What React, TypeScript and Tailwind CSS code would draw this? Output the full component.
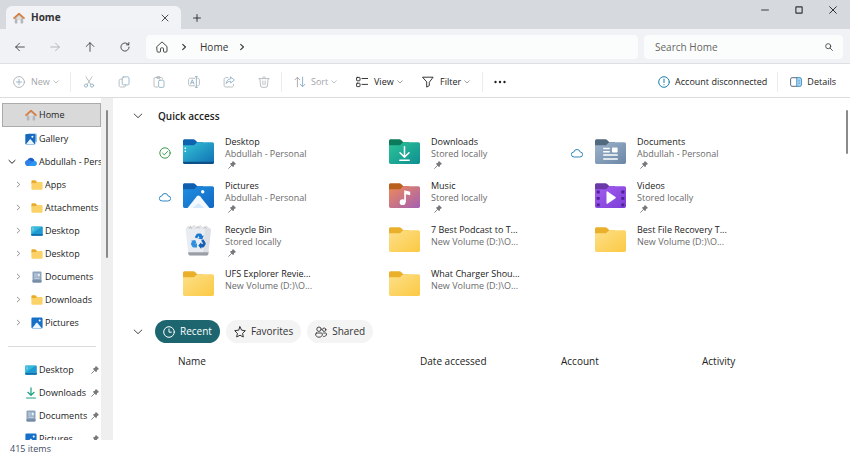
import { useState, type ReactNode } from 'react'

type Kind = 'desktop' | 'pictures' | 'downloads' | 'music' | 'documents' | 'videos' | 'plain' | 'bin'
type QuickItem = { name: string; place: string; kind: Kind; pinned?: boolean; sync?: 'done' | 'cloud' }
type NavKind = 'folder' | 'desktop' | 'documents' | 'pictures' | 'downloads'

const quickItems: QuickItem[] = [
  { name: 'Desktop', place: 'Abdullah - Personal', kind: 'desktop', pinned: true, sync: 'done' },
  { name: 'Downloads', place: 'Stored locally', kind: 'downloads', pinned: true },
  { name: 'Documents', place: 'Abdullah - Personal', kind: 'documents', pinned: true, sync: 'cloud' },
  { name: 'Pictures', place: 'Abdullah - Personal', kind: 'pictures', pinned: true, sync: 'cloud' },
  { name: 'Music', place: 'Stored locally', kind: 'music', pinned: true },
  { name: 'Videos', place: 'Stored locally', kind: 'videos', pinned: true },
  { name: 'Recycle Bin', place: 'Stored locally', kind: 'bin', pinned: true },
  { name: '7 Best Podcast to T...', place: 'New Volume (D:)\\O...', kind: 'plain' },
  { name: 'Best File Recovery T...', place: 'New Volume (D:)\\O...', kind: 'plain' },
  { name: 'UFS Explorer Revie...', place: 'New Volume (D:)\\O...', kind: 'plain' },
  { name: 'What Charger Shou...', place: 'New Volume (D:)\\O...', kind: 'plain' },
]

const treeItems: { name: string; kind: NavKind }[] = [
  { name: 'Apps', kind: 'folder' },
  { name: 'Attachments', kind: 'folder' },
  { name: 'Desktop', kind: 'desktop' },
  { name: 'Desktop', kind: 'folder' },
  { name: 'Documents', kind: 'documents' },
  { name: 'Downloads', kind: 'folder' },
  { name: 'Pictures', kind: 'pictures' },
]

const pinnedItems: { name: string; kind: NavKind }[] = [
  { name: 'Desktop', kind: 'desktop' },
  { name: 'Downloads', kind: 'downloads' },
  { name: 'Documents', kind: 'documents' },
  { name: 'Pictures', kind: 'pictures' },
]

// tab, gradient start, gradient end
const folderColors: Record<Kind, [string, string, string]> = {
  desktop: ['#0f62b0', '#35c4d6', '#0f6fb4'],
  pictures: ['#0f5eb0', '#1f8fe0', '#1268c4'],
  downloads: ['#0d7a5c', '#2cc497', '#0f8f92'],
  music: ['#b9601c', '#ee8a58', '#a45fb4'],
  documents: ['#51697d', '#9db4cb', '#6b86a6'],
  videos: ['#6a3aa8', '#a65cf0', '#7a3fd8'],
  plain: ['#eab02c', '#fde08a', '#fbc943'],
  bin: ['', '', ''],
}

/* ---------- line icons ---------- */

function Line({ children, className = 'size-3', w = 1 }: { children: ReactNode; className?: string; w?: number }) {
  return (
    <svg viewBox="0 0 12 12" fill="none" stroke="currentColor" strokeWidth={w} strokeLinecap="round" strokeLinejoin="round"
      className={`shrink-0 ${className}`} aria-hidden="true">
      {children}
    </svg>
  )
}

const ChevronDown = ({ className = 'size-3', w = 1 }: { className?: string; w?: number }) => (
  <Line className={className} w={w}><path d="M1.400 3.600 6 8l4.600-4.400" /></Line>
)
const ChevronRight = ({ className = 'size-2' }: { className?: string }) => (
  <Line className={className} w={1.6}><path d="M4 2l4.200 4L4 10" /></Line>
)

const CutIcon = () => (
  <Line w={0.8}>
    <path d="M3 .8l4.800 7.600M9 .8L4.200 8.400" />
    <g stroke="#86a9bf"><circle cx="3" cy="9.600" r="1.600" /><circle cx="9" cy="9.600" r="1.600" /></g>
  </Line>
)
const CopyIcon = () => (
  <Line w={0.8}>
    <rect x="4.200" y=".9" width="6.800" height="8" rx="1.400" stroke="#86a9bf" />
    <path d="M4 3.200H2.600c-.9 0-1.500.6-1.500 1.500v4.800c0 .9.6 1.500 1.500 1.500h3.600c.8 0 1.300-.6 1.300-1.300v-.6" />
  </Line>
)
const PasteIcon = () => (
  <Line w={0.8}>
    <path d="M4.600 11H2.400C1.600 11 1 10.400 1 9.600V2.800C1 2 1.600 1.500 2.400 1.500h5.800c.8 0 1.400.5 1.400 1.300" />
    <path d="M3.400 1.500c0-.6.4-.9.9-.9h2c.5 0 .9.300.9.9s-.4.900-.9.900h-2c-.5 0-.9-.3-.9-.9z" />
    <rect x="5.600" y="4.200" width="5.400" height="7.200" rx="1.200" stroke="#86a9bf" />
  </Line>
)
const RenameIcon = () => (
  <Line w={0.8}>
    <path d="M7 2.200H2.200C1.300 2.200.6 2.900.6 3.800v4.400c0 .9.7 1.600 1.600 1.600H7M9.800 2.200c.9 0 1.600.7 1.600 1.600v4.400c0 .9-.7 1.600-1.600 1.600" />
    <path d="M2.600 8l1.700-4.300L6 8M3.200 6.700h2.200M8.400.8v10.400M7.400.6h2M7.400 11.400h2" stroke="#86a9bf" />
  </Line>
)
const ShareIcon = () => (
  <Line w={0.8}>
    <path d="M5 1.600H2.800c-1 0-1.700.7-1.700 1.700v6c0 1 .7 1.700 1.700 1.700h6c1 0 1.700-.7 1.700-1.700V8.400" />
    <path d="M7.600 1l3.800 3-3.800 3V5.300C5.600 5.200 4.200 6 3.200 7.600c.2-2.900 1.900-4.600 4.400-4.900z" stroke="#86a9bf" />
  </Line>
)
const TrashIcon = () => (
  <Line w={0.8}>
    <path d="M.8 2.600h10.400M4.500 2.400C4.500 1.500 5.100.9 6 .9s1.500.6 1.500 1.500M1.900 2.800l.7 7.200c.1.800.6 1.300 1.400 1.300h4c.8 0 1.300-.5 1.400-1.300l.7-7.200M4.900 5v3.800M7.100 5v3.800" />
  </Line>
)
const HomeLine = () => (
  <Line w={0.9}>
    <path d="M1 5.500L6 .9l5 4.600v4.600c0 .6-.4 1-1 1H8.200c-.4 0-.7-.3-.7-.7V7.600c0-.4-.3-.7-.7-.7H5.200c-.4 0-.7.3-.7.700v2.800c0 .4-.3.700-.7.700H2c-.6 0-1-.4-1-1z" />
  </Line>
)

const Pin = () => (
  <svg viewBox="0 0 9 9" className="size-2 shrink-0 text-[#77797c]" aria-hidden="true">
    <path d="M5.200.4c.2-.3.5-.3.8-.1l2.600 2.500c.3.300.2.700-.1.900L6.900 4.500l-.6 2c-.1.400-.5.500-.8.200L2.300 3.500c-.3-.3-.2-.7.2-.8l1.900-.6z" fill="currentColor" />
    <path d="M4 5L.7 8.300" stroke="currentColor" strokeLinecap="round" />
  </svg>
)

/* ---------- coloured icons ---------- */

const HouseIcon = () => (
  <svg viewBox="0 0 12 12" className="size-3 shrink-0" aria-hidden="true">
    <path d="M1.800 5.500L6 1.800l4.200 3.700v5.300c0 .4-.3.700-.7.700H7.600V7.600H4.400v3.900H2.500c-.4 0-.7-.3-.7-.7z" fill="#b4b7bd" />
    <path d="M3.600 5.400L6 3.400l2.400 2v2.200H3.600z" fill="#e4dcd6" />
    <path d="M1 6.200L6 1.500l5 4.700" fill="none" stroke="#db7d3b" strokeWidth="1.600" strokeLinecap="round" strokeLinejoin="round" />
  </svg>
)

const GalleryIcon = () => (
  <svg viewBox="0 0 12 12" className="size-3 shrink-0" aria-hidden="true">
    <path d="M3 .5h7.500c.8 0 1.300.5 1.300 1.300v8z" fill="#7fb9e6" />
    <rect x=".3" y="1" width="10" height="10.500" rx="1.300" fill="#1769bd" />
    <path d="M1 11.300l3.600-4.600c.4-.5 1-.5 1.400 0l3.700 4.600z" fill="#eaf5fd" />
    <circle cx="7.400" cy="3.800" r="1" fill="#fff" />
  </svg>
)

const OneDriveIcon = () => (
  <svg viewBox="0 0 12 12" className="size-3 shrink-0" aria-hidden="true">
    <path d="M3 10a3 3 0 0 1-.6-5.900A3.700 3.700 0 0 1 9 3.600l.4.900L5 10z" fill="#1a5fce" />
    <path d="M2.300 4.200c1.900-.8 3.100.1 4.600 1.200l3.700 2.900-2.800 1.700H3A3 3 0 0 1 .3 7.200c0-1.500.8-2.600 2-3z" fill="#2f7fe8" />
    <path d="M2.800 10l4.900-4.600c1.800-1.500 4.200 0 4.200 2.200 0 1.400-1 2.400-2.300 2.400z" fill="#2b97f4" />
  </svg>
)

function NavIcon({ kind }: { kind: NavKind }) {
  return (
    <svg viewBox="0 0 12 12" className="size-3 shrink-0" aria-hidden="true">
      {kind === 'folder' && <>
        <path d="M.4 2.200c0-.5.400-.9.900-.9h3l1.500 1.500H6v2H.4z" fill="#e9ab2c" />
        <path d="M.4 4.200h3.700c.6 0 .9-.2 1.300-.6l.6-.7h4.700c.5 0 .9.400.9.900v6c0 .5-.4.900-.9.900H1.300c-.5 0-.9-.4-.9-.9z" fill="#fbd267" />
      </>}
      {kind === 'desktop' && <>
        <rect x=".2" y="1.500" width="11.600" height="9.200" rx="1" fill="#1f9bd1" />
        <path d="M.2 9V2.500c0-.6.400-1 1-1h9.600z" fill="#3fc3df" opacity=".75" />
        <path d="M.2 9h11.600v.7c0 .6-.4 1-1 1H1.200c-.6 0-1-.4-1-1z" fill="#1170ad" />
        <path d="M1.500 3h1M1.500 4.800h1" stroke="#fff" strokeWidth=".7" />
      </>}
      {kind === 'documents' && <>
        <rect x="1.500" y=".4" width="9" height="11.200" rx="1.100" fill="#8ea4bd" />
        <path d="M3.200 3h2.600M3.200 5h2.600M3.200 7.200h5.600" stroke="#e4edf6" strokeWidth=".8" />
        <rect x="6.600" y="2.600" width="2.200" height="2.800" fill="#e9f1f9" />
        <path d="M1.500 9.200h9v1.300c0 .6-.5 1.100-1.100 1.100H2.600c-.6 0-1.100-.5-1.100-1.100z" fill="#7389a5" />
      </>}
      {kind === 'pictures' && <>
        <rect x=".4" y=".6" width="11.200" height="10.800" rx="1.100" fill="#1670c8" />
        <path d="M1.200 11.200L5 6.200c.5-.6 1.200-.6 1.700 0l4.100 5z" fill="#eef7fe" />
        <circle cx="8.700" cy="3.400" r="1" fill="#fff" />
      </>}
      {kind === 'downloads' && (
        <path d="M6 .8v7.400M2.900 5.300L6 8.300l3.100-3M1.600 11h8.800" fill="none" stroke="#1aa183" strokeWidth="1.200" strokeLinecap="round" strokeLinejoin="round" />
      )}
    </svg>
  )
}

function BinIcon() {
  return (
    <svg viewBox="0 0 31 32" className="h-8 w-[31px] shrink-0" aria-hidden="true">
      <path d="M3 4.500l2.500-3 2.500 1.500L11 .8l3 2.200 3.500-2L20 3l3.500-1.500L27.500 5v3H3z" fill="#e3e5e8" />
      <path d="M6 5l1.500-2.500L9 5M13 4.500l2-2 1.500 2M20.500 5l1.800-2 1.700 2" fill="none" stroke="#a9adb3" strokeWidth=".8" />
      <path d="M2.500 4.800H28L25.300 30c-.1.900-.7 1.400-1.500 1.400H6.900c-.8 0-1.400-.5-1.500-1.400z" fill="#e9edf1" />
      <path d="M22 4.800h6L25.300 30c-.1.900-.7 1.400-1.500 1.400H20z" fill="#dce0e5" />
      <path d="M5.200 28.300h20.300L25.300 30c-.1.900-.7 1.400-1.500 1.400H6.900c-.8 0-1.400-.5-1.500-1.400z" fill="#9a9fa6" />
      <path d="M11.700 13.200l1.800-2.900c.4-.6.900-.8 1.500-.8h2.200c.7 0 1.200.3 1.500.9l.9 1.500 1.200-.7-1.500 4.200-4.300-.8 1.400-.9-1-1.700-1.300 2.500z" fill="#1c78d0" />
      <path d="M20.400 15.300l2.100 3.500c.3.600.3 1.200 0 1.700l-1.200 2.100c-.3.600-.8.900-1.500.9h-1.600v1.400l-2.900-3.400 2.900-3.300v1.600h2l-2-3.400z" fill="#155fb5" />
      <path d="M14 23.500h-3.300c-.7 0-1.200-.3-1.500-.9l-1-1.900c-.3-.6-.3-1.100 0-1.700l.9-1.500-1.200-.7 4.400-.8 1.500 4.200-1.400-.8-.3.700H14z" fill="#2f90e0" />
    </svg>
  )
}

function BigIcon({ kind }: { kind: Kind }) {
  if (kind === 'bin') return <BinIcon />
  const [tab, from, to] = folderColors[kind]
  const id = `fill-${kind}`
  return (
    <svg viewBox="0 0 31 25" className="h-[25px] w-[31px] shrink-0" aria-hidden="true">
      <defs>
        <linearGradient id={id} x1="0" y1="0" x2="1" y2="1">
          <stop offset="0" stopColor={from} />
          <stop offset="1" stopColor={to} />
        </linearGradient>
      </defs>
      <path d="M0 1.800C0 .8.800.2 1.700.2h8.700c.7 0 1.200.2 1.700.7l2.300 2.400H20v5H0z" fill={tab} />
      <path d="M0 6.300h9.800c.9 0 1.500-.3 2.100-.9l1.400-1.500c.4-.4.900-.6 1.500-.6h14.500c1 0 1.700.7 1.700 1.700v18.200c0 1-.7 1.700-1.700 1.700H1.700c-1 0-1.700-.7-1.700-1.700z" fill={`url(#${id})`} />
      {kind === 'desktop' && <>
        <path d="M0 22.700h31v.5c0 1-.7 1.700-1.700 1.700H1.700c-1 0-1.700-.7-1.700-1.700z" fill="#0d4f86" />
        <path d="M2.300 8.500v1.500M2.300 11.500v1.500" stroke="#e8fbff" strokeWidth="1.500" />
      </>}
      {kind === 'pictures' && <>
        <path d="M4.500 24.900l9.400-11.600c.9-1 2.200-1 3.100 0l9.500 11.600z" fill="#f3f9fe" />
        <path d="M9.800 24.900l4.600-4c.6-.5 1.500-.5 2.100 0l4.600 4z" fill="#d5e9fa" />
        <circle cx="19.700" cy="8.800" r="1.700" fill="#fff" />
      </>}
      {kind === 'downloads' && (
        <path d="M15.500 7.800v10M11 13.800l4.500 4.300 4.500-4.300M10.800 21.200h9.400" fill="none" stroke="#fff" strokeWidth="1.500" strokeLinejoin="round" strokeLinecap="round" />
      )}
      {kind === 'music' && <>
        <circle cx="13.600" cy="19.200" r="2.900" fill="#fff" />
        <path d="M15.200 7.200l6 1.500v3.600l-4.300-1.100v8h-1.700z" fill="#fff" />
      </>}
      {kind === 'documents' && <>
        <path d="M8.200 9.500h6.600M8.200 12.700h6.600M8.200 16h14.600M8.200 20h14.600" stroke="#fff" strokeWidth="1.400" />
        <rect x="17" y="8.600" width="5.600" height="5" rx=".8" fill="#fff" />
      </>}
      {kind === 'videos' && <>
        <path d="M3.200 7.600v16.400M27.800 7.600v16.400" stroke="#4a2394" strokeWidth="3" strokeDasharray="2.800 3.600" />
        <path d="M11.500 9v11.200c0 .6.500.8 1 .5l8-5.500c.4-.3.400-.8 0-1.100l-8-5.600c-.5-.3-1-.1-1 .5z" fill="#fff" />
      </>}
    </svg>
  )
}

/* ---------- page pieces ---------- */

function IconButton({ label, className, children }: { label: string; className: string; children: ReactNode }) {
  return <button aria-label={label} className={`flex shrink-0 items-center justify-center ${className}`}>{children}</button>
}

const Divider = () => <span className="h-5 w-px shrink-0 bg-[#ececec]" />

function TitleBar() {
  return (
    <header className="flex h-[29px] shrink-0 bg-[#d6d9de] pl-1.5">
      <div className="mt-1.5 flex w-[175px] items-center rounded-t-md bg-[#f2f3f7] pr-[10px] pl-[7px]">
        <HouseIcon />
        <span className="ml-1.5 text-[10px] font-bold text-[#333]">Home</span>
        <IconButton label="Close tab" className="ml-auto size-3">
          <Line className="size-2" w={1.2}><path d="M1.500 1.500l9 9M10.500 1.500l-9 9" /></Line>
        </IconButton>
      </div>
      <IconButton label="New tab" className="mt-1.5 w-8">
        <Line className="size-2" w={1.3}><path d="M6 .8v10.400M.8 6h10.400" /></Line>
      </IconButton>
      <div className="ml-auto flex h-5 text-[#333]">
        <IconButton label="Minimize" className="w-[34px]"><Line className="size-2" w={1.4}><path d="M.8 6h10.400" /></Line></IconButton>
        <IconButton label="Maximize" className="w-[34px]"><Line className="size-2" w={1.7}><rect x="1.300" y="1.300" width="9.400" height="9.400" rx=".6" /></Line></IconButton>
        <IconButton label="Close" className="w-[34px]"><Line className="size-2" w={1.5}><path d="M1 1l10 10M11 1L1 11" /></Line></IconButton>
      </div>
    </header>
  )
}

function AddressBar() {
  return (
    <nav className="flex h-[35px] shrink-0 items-center border-b border-[#dfe0e3] bg-[#f1f2f6] pt-0.5 pr-[7px] pl-0.5 text-[#333]">
      <IconButton label="Back" className="h-6 w-[35px]"><Line className="size-[10px]"><path d="M11.200 6H.9M5.400 1.400L.8 6l4.600 4.600" /></Line></IconButton>
      <IconButton label="Forward" className="h-6 w-[35px] text-[#a9abb0]"><Line className="size-[10px]"><path d="M.8 6h10.300M6.600 1.400L11.200 6l-4.600 4.600" /></Line></IconButton>
      <IconButton label="Up" className="h-6 w-[35px]"><Line className="size-[10px]"><path d="M6 11.200V.9M1.400 5.400L6 .8l4.600 4.600" /></Line></IconButton>
      <IconButton label="Refresh" className="h-6 w-[35px]"><Line className="size-[10px]"><path d="M10.900 6A4.900 4.900 0 1 1 8.900 2.100l1.500 1.200M10.600.6v2.800H7.800" /></Line></IconButton>
      <div className="ml-1 flex h-6 min-w-0 flex-1 items-center rounded bg-[#fbfcfc] pl-[10px]">
        <HomeLine />
        <ChevronRight className="ml-3 size-2" />
        <a href="#home" className="ml-3 text-[10px]">Home</a>
        <ChevronRight className="ml-[10px] size-2" />
      </div>
      <label className="ml-1.5 flex h-6 w-[199px] items-center rounded bg-[#fbfcfc] pr-[10px] pl-[11px]">
        <input type="search" placeholder="Search Home" aria-label="Search Home"
          className="min-w-0 flex-1 bg-transparent text-[10px] outline-none placeholder:text-[#666]" />
        <Line className="size-2" w={1.2}><circle cx="4.800" cy="4.800" r="3.800" /><path d="M7.700 7.700l3.500 3.500" /></Line>
      </label>
    </nav>
  )
}

function Toolbar() {
  return (
    <div role="toolbar" aria-label="Commands" className="flex h-[34px] shrink-0 items-center border-b border-[#dcdcdc] bg-white pt-0.5 text-[9px]">
      <button disabled className="flex w-[70px] items-center pl-[13px] text-[#a3a6a9]">
        <Line w={0.8}><circle cx="6" cy="6" r="5.400" /><path d="M6 3.400v5.200M3.400 6h5.200" stroke="#86a9bf" /></Line>
        <span className="ml-1.5">New</span>
        <ChevronDown className="ml-[3px] size-1.5" w={1.4} />
      </button>
      <Divider />
      <div className="flex text-[#a9afb4]">
        <IconButton label="Cut" className="h-6 w-[35px]"><CutIcon /></IconButton>
        <IconButton label="Copy" className="h-6 w-[35px]"><CopyIcon /></IconButton>
        <IconButton label="Paste" className="h-6 w-[35px]"><PasteIcon /></IconButton>
        <IconButton label="Rename" className="h-6 w-[35px]"><RenameIcon /></IconButton>
        <IconButton label="Share" className="h-6 w-[35px]"><ShareIcon /></IconButton>
        <IconButton label="Delete" className="h-6 w-[35px]"><TrashIcon /></IconButton>
      </div>
      <Divider />
      <button disabled className="flex w-[62px] items-center pl-3 text-[#a3a6a9]">
        <Line w={0.9}><path d="M3.400 10.800V1.400M1 3.800l2.400-2.500 2.400 2.500" /><path d="M8.600 1.200v9.400M6.200 8.200l2.400 2.500L11 8.200" stroke="#86a9bf" /></Line>
        <span className="ml-[5px]">Sort</span>
        <ChevronDown className="ml-[3px] size-1.5" w={1.4} />
      </button>
      <button className="flex w-[66px] items-center pl-3">
        <Line w={0.9}>
          <rect x=".6" y="1.400" width="3.400" height="3.400" rx=".6" /><rect x=".6" y="7.200" width="3.400" height="3.400" rx=".6" />
          <path d="M6 2.500h5.600M6 8.400h5.600" />
        </Line>
        <span className="ml-1.5">View</span>
        <ChevronDown className="ml-[3px] size-1.5 text-[#777]" w={1.4} />
      </button>
      <button className="flex w-[72px] items-center pl-3">
        <Line w={0.9}><path d="M.9 1.200h10.200L7.300 6.300v3.300l-2.600 1.500V6.300z" /></Line>
        <span className="ml-1.5">Filter</span>
        <ChevronDown className="ml-[3px] size-1.5 text-[#777]" w={1.4} />
      </button>
      <Divider />
      <IconButton label="See more" className="h-6 w-[34px]">
        <svg viewBox="0 0 12 4" className="h-1 w-3" fill="currentColor"><circle cx="1.500" cy="2" r="1.200" /><circle cx="6" cy="2" r="1.200" /><circle cx="10.500" cy="2" r="1.200" /></svg>
      </IconButton>
      <button className="ml-auto flex items-center pr-[10px]">
        <Line className="size-3 text-[#1b7fae]"><circle cx="6" cy="6" r="5.300" /><path d="M6 3v3.600M6 8.600v.2" /></Line>
        <span className="ml-[5px]">Account disconnected</span>
      </button>
      <Divider />
      <button className="flex items-center pr-3.5 pl-3">
        <svg viewBox="0 0 12 12" className="size-3 shrink-0" fill="none" stroke="#4d5b66" strokeWidth=".9" aria-hidden="true">
          <path d="M7 10.300H2c-.8 0-1.400-.6-1.400-1.400V3.100c0-.8.6-1.400 1.400-1.400h5" />
          <path d="M6.800 1.700H10c.8 0 1.400.6 1.400 1.400v5.800c0 .8-.6 1.400-1.400 1.400H6.800z" fill="#bfe0f5" stroke="#2583bd" />
          <path d="M8.300 4.200h1.600M8.300 6h1.600M8.300 7.800h1.600" stroke="#2583bd" strokeWidth=".7" />
        </svg>
        <span className="ml-[5px]">Details</span>
      </button>
    </div>
  )
}

function Sidebar() {
  return (
    <aside className="flex w-[113px] shrink-0">
      <ul className="min-w-0 flex-1 overflow-hidden pt-[5px] text-[9px] whitespace-nowrap">
        <li>
          <a href="#home" aria-current="page" className="ml-0.5 flex h-6 items-center gap-0.5 border border-[#ababab] bg-[#d9d9d9] pl-[22px]">
            <HouseIcon /><span>Home</span>
          </a>
        </li>
        <li><a href="#gallery" className="flex h-[23px] items-center gap-0.5 pl-[25px]"><GalleryIcon /><span>Gallery</span></a></li>
        <li>
          <a href="#onedrive" className="flex h-[23px] items-center pl-2">
            <ChevronDown className="size-2" w={1.5} />
            <span className="ml-[9px] flex items-center gap-0.5"><OneDriveIcon /><span>Abdullah - Personal</span></span>
          </a>
          <ul>
            {treeItems.map((item, i) => (
              <li key={i}>
                <a href={`#tree-${i}`} className="flex h-[23px] items-center pl-[15px]">
                  <ChevronRight className="size-[7px] text-[#888]" />
                  <span className="ml-[9px] flex items-center gap-0.5"><NavIcon kind={item.kind} /><span>{item.name}</span></span>
                </a>
              </li>
            ))}
          </ul>
        </li>
        <li role="separator" className="mr-[5px] ml-2 flex h-6 items-center"><span className="h-px flex-1 bg-[#dcdcdc]" /></li>
        {pinnedItems.map(item => (
          <li key={item.name}>
            <a href={`#${item.kind}`} className="flex h-[23px] items-center gap-0.5 pr-0.5 pl-[25px]">
              <NavIcon kind={item.kind} />
              <span className="flex-1">{item.name}</span>
              <Pin />
            </a>
          </li>
        ))}
      </ul>
      <div className="w-3 bg-[#efefef] pt-3"><div className="mx-auto h-[148px] w-0.5 rounded-full bg-[#8a8a8a]" /></div>
    </aside>
  )
}

function SyncMark({ sync }: { sync?: 'done' | 'cloud' }) {
  return (
    <span className="flex w-3 shrink-0 justify-center pt-[11px]">
      {sync === 'done' && <Line className="size-3 text-[#3d9a4b]"><circle cx="6" cy="6" r="5.200" /><path d="M3.600 6.200l1.700 1.700 3.200-3.400" /></Line>}
      {sync === 'cloud' && <Line className="size-3 text-[#2f86c0]"><path d="M2.900 10a2.500 2.500 0 0 1-.1-5 3.300 3.300 0 0 1 6.400 0 2.500 2.500 0 0 1-.1 5z" /></Line>}
    </span>
  )
}

function QuickAccess() {
  return (
    <section className="pt-[10px]">
      <h2 className="flex h-4 items-center pl-5 text-[10px] font-semibold">
        <button aria-label="Collapse quick access"><ChevronDown className="size-[10px]" /></button>
        <span className="ml-[15px]">Quick access</span>
      </h2>
      <ul className="mt-3 grid grid-cols-[repeat(auto-fill,206px)] pl-[46px]">
        {quickItems.map(item => (
          <li key={item.name} className="flex h-11">
            <SyncMark sync={item.sync} />
            <span className={`ml-3 shrink-0 ${item.kind === 'bin' ? '' : 'pt-[3px]'}`}><BigIcon kind={item.kind} /></span>
            <div className="ml-[11px] text-[9px] leading-3 whitespace-nowrap">
              <p>{item.name}</p>
              <p className="text-[#6b6b6b]">{item.place}</p>
              {item.pinned && <div className="pt-px pl-[3px]"><Pin /></div>}
            </div>
          </li>
        ))}
      </ul>
    </section>
  )
}

const filters = [
  { name: 'Recent', icon: <Line><circle cx="6" cy="6" r="5.300" /><path d="M6 3v3.200h2.400" /></Line> },
  { name: 'Favorites', icon: <Line><path d="M6 .8l1.600 3.400 3.700.5-2.700 2.600.7 3.700L6 9.200 2.700 11l.7-3.700L.7 4.700l3.700-.5z" /></Line> },
  { name: 'Shared', icon: <Line w={0.9}><circle cx="4" cy="3.200" r="2.200" /><circle cx="9.200" cy="3.700" r="1.700" /><path d="M1.600 7h4.800c.6 0 1 .4 1 1 0 2-1.300 3.200-3.400 3.200S.6 10 .6 8c0-.6.400-1 1-1zM8.600 7h1.900c.6 0 1 .4 1 1 0 1.600-1.100 2.600-2.900 2.500" /></Line> },
]

function RecentFiles() {
  const [active, setActive] = useState('Recent')
  return (
    <section className="mt-2">
      <div className="flex items-center gap-1.5 pl-5">
        <button aria-label="Collapse recent files" className="mr-1.5"><ChevronDown className="size-[10px]" /></button>
        {filters.map(f => (
          <button key={f.name} onClick={() => setActive(f.name)} aria-pressed={active === f.name}
            className={`flex h-[23px] items-center gap-[5px] rounded-full px-2 text-[10px] ${active === f.name ? 'bg-[#1d6670] text-white' : 'bg-[#f4f4f4] text-[#333]'}`}>
            {f.icon}{f.name}
          </button>
        ))}
      </div>
      <table className="mt-[9px] ml-[65px] table-fixed text-left text-[10px]">
        <thead>
          <tr className="h-[18px]">
            <th className="w-[242px] p-0 font-normal">Name</th>
            <th className="w-[141px] p-0 font-normal">Date accessed</th>
            <th className="w-[141px] p-0 font-normal">Account</th>
            <th className="p-0 font-normal">Activity</th>
          </tr>
        </thead>
      </table>
    </section>
  )
}

export default function App() {
  return (
    <div className="flex h-screen flex-col overflow-hidden bg-white font-['Open_Sans','Noto_Sans',sans-serif] text-[#222]">
      <TitleBar />
      <AddressBar />
      <Toolbar />
      <div className="flex min-h-0 flex-1">
        <Sidebar />
        <main className="relative min-w-0 flex-1 overflow-hidden">
          <QuickAccess />
          <RecentFiles />
          <div className="absolute top-3 right-0.5 h-11 w-0.5 rounded-full bg-[#8a8a8a]" />
        </main>
      </div>
      <footer className="flex h-4 shrink-0 items-center pt-0.5 pl-2.5 text-[9px] text-[#3d4a63]">415 items</footer>
    </div>
  )
}
